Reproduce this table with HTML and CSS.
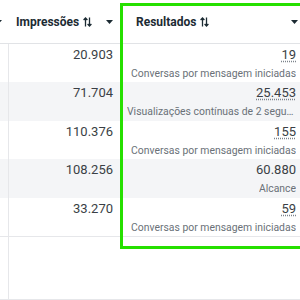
FILE: index.html
```html
<!DOCTYPE html>
<html lang="pt-BR">
<head>
<meta charset="utf-8">
<link rel="stylesheet" href="styles.css">
</head>
<body>
<div class="viewport">
  <div class="table">
    <div class="row head">
      <div class="cell c0"><svg class="caret" viewBox="0 0 7 4" width="7" height="4"><polygon points="0,0 7,0 3.5,4"/></svg></div>
      <div class="cell c1">
        <span class="htext">Impressões</span>
        <svg class="sort" viewBox="0 0 9 10" width="9" height="10"><path d="M2.5 9.5V1M0.6 3 2.5 1 4.4 3M6.5 0.5V9M4.6 7 6.5 9 8.4 7"/></svg>
        <span class="spacer"></span>
        <svg class="caret" viewBox="0 0 7 4" width="7" height="4"><polygon points="0,0 7,0 3.5,4"/></svg>
      </div>
      <div class="cell c2">
        <span class="htext">Resultados</span>
        <svg class="sort" viewBox="0 0 9 10" width="9" height="10"><path d="M2.5 9.5V1M0.6 3 2.5 1 4.4 3M6.5 0.5V9M4.6 7 6.5 9 8.4 7"/></svg>
        <span class="spacer"></span>
        <svg class="caret" viewBox="0 0 7 4" width="7" height="4"><polygon points="0,0 7,0 3.5,4"/></svg>
      </div>
    </div>

    <div class="row odd">
      <div class="cell c0"></div>
      <div class="cell c1"><span class="num">20.903</span></div>
      <div class="cell c2"><span class="num dotted">19</span><span class="sub">Conversas por mensagem iniciadas</span></div>
    </div>
    <div class="row even">
      <div class="cell c0"></div>
      <div class="cell c1"><span class="num">71.704</span></div>
      <div class="cell c2"><span class="num dotted">25.453</span><span class="sub">Visualizações contínuas de 2 segundos do vídeo</span></div>
    </div>
    <div class="row odd">
      <div class="cell c0"></div>
      <div class="cell c1"><span class="num">110.376</span></div>
      <div class="cell c2"><span class="num dotted">155</span><span class="sub">Conversas por mensagem iniciadas</span></div>
    </div>
    <div class="row even">
      <div class="cell c0"></div>
      <div class="cell c1"><span class="num">108.256</span></div>
      <div class="cell c2"><span class="num">60.880</span><span class="sub">Alcance</span></div>
    </div>
    <div class="row odd">
      <div class="cell c0"></div>
      <div class="cell c1"><span class="num">33.270</span></div>
      <div class="cell c2"><span class="num dotted">59</span><span class="sub">Conversas por mensagem iniciadas</span></div>
    </div>

    <div class="row foot">
      <div class="cell c0"></div>
      <div class="cell c1"></div>
      <div class="cell c2"></div>
    </div>
  </div>
  <div class="highlight"></div>
</div>
</body>
</html>
```

FILE: styles.css
```css
html, body {
  margin: 0;
  padding: 0;
  background: #ffffff;
}

body {
  width: 300px;
  height: 300px;
  overflow: hidden;
  font-family: Roboto, "Liberation Sans", sans-serif;
  color: #1c2b33;
}

.viewport {
  position: relative;
  width: 300px;
  height: 300px;
  overflow: hidden;
}

.table {
  margin-left: -32px;
  width: 335px;
}

.row {
  display: grid;
  grid-template-columns: 41px 111px 183px;
}

.cell {
  box-sizing: border-box;
  min-width: 0;
}

.c0 {
  border-right: 1px solid #e6e7ea;
}

.head {
  height: 44px;
  border-bottom: 1px solid #e1e3e6;
  box-sizing: border-box;
}

.head .cell {
  display: flex;
  align-items: center;
  padding-top: 1px;
}

.head .c0 {
  border-right-color: transparent;
  justify-content: flex-end;
  padding-right: 6px;
  padding-top: 0;
}

.head .c1 {
  padding: 1px 7px 0 7px;
}

.head .c2 {
  padding: 1px 5px 0 16px;
}

.htext {
  font-size: 12px;
  font-weight: 700;
  color: #1c2b33;
  white-space: nowrap;
}

.sort {
  margin-left: 4px;
  fill: none;
  stroke: #1c2b33;
  stroke-width: 1.3;
}

.spacer {
  flex: 1;
}

.caret {
  fill: #1c2b33;
}

.odd {
  height: 38px;
  background: #ffffff;
}

.even {
  height: 39px;
  background: #f4f5f7;
}

.odd .c1, .odd .c2, .even .c1, .even .c2 {
  display: flex;
  flex-direction: column;
  align-items: flex-end;
  padding: 3px 7px 0 7px;
}

.num {
  font-size: 13px;
  line-height: 16px;
  color: #3a3f45;
  white-space: nowrap;
}

.dotted {
  text-decoration: underline dotted #7d848c;
  text-underline-offset: 2px;
}

.sub {
  margin-top: 4px;
  font-size: 10.4px;
  line-height: 14px;
  color: #6a7178;
  white-space: nowrap;
  overflow: hidden;
  text-overflow: ellipsis;
  max-width: 100%;
}

.foot {
  height: 64px;
  border-top: 1px solid #e6e7ea;
  border-bottom: 1px solid #e6e7ea;
  box-sizing: border-box;
}

.highlight {
  position: absolute;
  left: 120px;
  top: 3px;
  width: 300px;
  height: 246px;
  border: 3px solid #26e000;
  border-right: 0;
  box-sizing: border-box;
  pointer-events: none;
}
```
